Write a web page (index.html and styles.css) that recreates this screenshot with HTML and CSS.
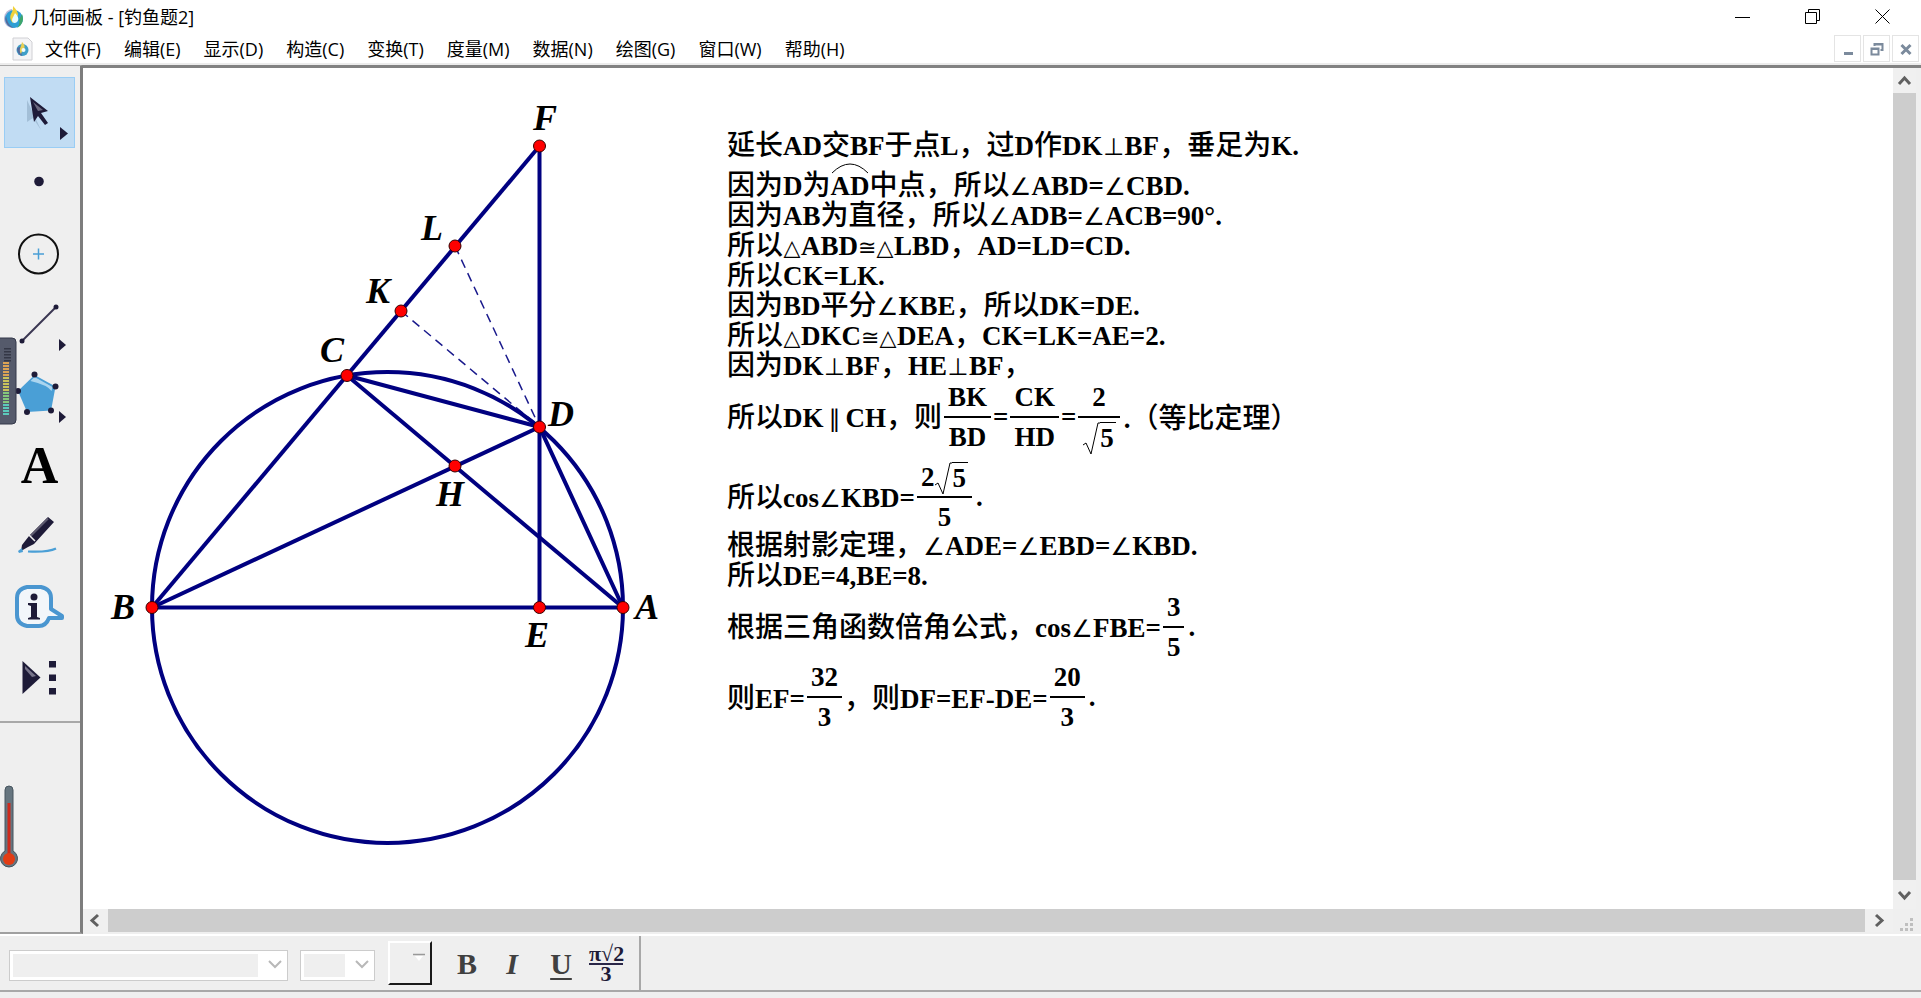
FILE: index.html
```html
<!DOCTYPE html>
<html lang="zh-CN">
<head>
    <meta charset="UTF-8">
    <meta name="viewport" content="width=device-width, initial-scale=1.0">
    <title>几何画板 - [钓鱼题2]</title>
    <link rel="stylesheet" href="styles.css">
</head>
<body>
    <header class="titlebar">
        <svg class="app-icon" width="22" height="24" viewBox="0 0 22 24">
            <path d="M9 4C3 5 1 10 1 14c0 5 4 9 9 9" fill="#b9b8d8"/>
            <circle cx="11" cy="14" r="9" fill="#2e9fd4"/>
            <path d="M11 23a9 9 0 0 1-8-12c1 5 3 10 8 12z" fill="#5b6798"/>
            <path d="M14 23c6-3 7-9 5-14l-3 6c1 3 0 6-2 8z" fill="#3fa66a"/>
            <path d="M10 1c3 3 5 6 5 9-1 3-5 4-5 8-4-4-3-8-1-11 1-2 1-4 1-6z" fill="#f1d23b"/>
            <path d="M12 8c4 4 4 7 2 9s-5 1-5-2c0-2 2-4 3-7z" fill="#e9fbff"/>
        </svg>
        <span class="title">几何画板 - [钓鱼题2]</span>
        <div class="win-buttons">
            <button type="button" aria-label="最小化"><svg width="16" height="16" viewBox="0 0 16 16"><path d="M0 8.5h15" class="thin"/></svg></button>
            <button type="button" aria-label="还原"><svg width="16" height="16" viewBox="0 0 16 16"><path d="M.5 3.500h11v11H.5zM3.500 3.500v-3h11v11h-3" class="thin"/></svg></button>
            <button type="button" aria-label="关闭"><svg width="16" height="16" viewBox="0 0 16 16"><path d="M.5.500l14 14M14.500.500l-14 14" class="thin"/></svg></button>
        </div>
    </header>

    <nav class="menubar">
        <svg class="doc-icon" width="22" height="24" viewBox="0 0 22 24">
            <path d="M1 1h15l4 4v18H1z" fill="#f4f4f6" stroke="#d0d0d4"/>
            <circle cx="10.500" cy="13" r="6" fill="#3f9fc8"/>
            <path d="M5 11c0 4 2 7 5 8-1-5-1-7 0-10z" fill="#4f6ba0"/>
            <path d="M10 5c3 3 3 5 2 7s-3 3-3 5c-2-3-1-6 0-8z" fill="#e6cf55"/>
            <circle cx="11.500" cy="13" r="2" fill="#effcff"/>
        </svg>
        <button type="button">文件(F)</button>
        <button type="button">编辑(E)</button>
        <button type="button">显示(D)</button>
        <button type="button">构造(C)</button>
        <button type="button">变换(T)</button>
        <button type="button">度量(M)</button>
        <button type="button">数据(N)</button>
        <button type="button">绘图(G)</button>
        <button type="button">窗口(W)</button>
        <button type="button">帮助(H)</button>
        <div class="doc-buttons">
            <button type="button" aria-label="最小化文档"><svg width="14" height="14" viewBox="0 0 14 14"><path d="M3 11.500h9" stroke="#7b8a9c" stroke-width="3"/></svg></button>
            <button type="button" aria-label="还原文档"><svg width="14" height="14" viewBox="0 0 14 14"><path d="M1.500 6.500h7v6h-7zM1 7h8M4.500 4V2h8v6h-2M4 2.500h9" fill="none" stroke="#7b8a9c" stroke-width="2"/></svg></button>
            <button type="button" aria-label="关闭文档"><svg width="14" height="14" viewBox="0 0 14 14"><path d="M2.500 3l9 9M11.500 3l-9 9" stroke="#7b8a9c" stroke-width="3"/></svg></button>
        </div>
    </nav>

    <main class="workspace">
        <aside class="toolbox">
            <div class="tools">
                <button type="button" class="tool active" aria-label="移动箭头工具">
                    <svg width="71" height="70" viewBox="4 76 71 70">
                        <path d="M27 99l0 22 6-4 8 12" fill="#8fabc4" opacity=".6"/>
                        <path d="M30 96l18 14-7 2 7 10-3 2-7-9-4 6z" fill="#1e1b38"/>
                        <path d="M33 101l10 8-5 1z" fill="#6d6a80"/>
                        <path d="M60 126l8 6.500-8 6.500z" fill="#1e1b38"/>
                    </svg>
                </button>
                <button type="button" class="tool" aria-label="点工具">
                    <svg width="71" height="70" viewBox="4 147 71 70"><circle cx="39" cy="180.500" r="4.800" fill="#1e1b38"/></svg>
                </button>
                <button type="button" class="tool" aria-label="圆工具">
                    <svg width="71" height="70" viewBox="4 217 71 70">
                        <circle cx="38.500" cy="252" r="19.500" fill="none" stroke="#111" stroke-width="2"/>
                        <path d="M33 252h11M38.500 246.500v11" stroke="#4a9fd6" stroke-width="1.500"/>
                    </svg>
                </button>
                <button type="button" class="tool" aria-label="线段工具">
                    <svg width="71" height="70" viewBox="4 288 71 70">
                        <path d="M22 340l34-34" stroke="#3a3752" stroke-width="2"/>
                        <circle cx="22" cy="340" r="2.500" fill="#1e1b38"/>
                        <circle cx="56" cy="306" r="2.500" fill="#1e1b38"/>
                        <path d="M59 338l7 6-7 6z" fill="#1e1b38"/>
                    </svg>
                </button>
                <button type="button" class="tool" aria-label="多边形工具">
                    <svg width="71" height="70" viewBox="4 358 71 70">
                        <path d="M34.500 373l21 11.500-4.500 24-24 1.500-9-21z" fill="#4a9fd6"/>
                        <path d="M34.500 375l18 10-1 4q-4-6-21-10z" fill="#c3e2f5" opacity=".8"/>
                        <g fill="#1e1b38">
                            <circle cx="34.500" cy="372.500" r="3"/>
                            <circle cx="55.500" cy="384.500" r="3"/>
                            <circle cx="51" cy="408.500" r="3"/>
                            <circle cx="27" cy="410" r="3"/>
                            <circle cx="18" cy="389" r="3"/>
                            <path d="M59 409l7 6-7 6z"/>
                        </g>
                    </svg>
                </button>
                <button type="button" class="tool text-tool" aria-label="文本工具">A</button>
                <button type="button" class="tool" aria-label="标记工具">
                    <svg width="71" height="70" viewBox="4 499 71 70">
                        <path d="M48 515l6 5-20 22-6 3-7 4 1-6 7-9z" fill="#1e1b38"/>
                        <path d="M48 516.500l-18 18" stroke="#5e5b70" stroke-width="2"/>
                        <path d="M29 533l6 6" stroke="#efefef" stroke-width="1.500"/>
                        <path d="M18 549l4-3 1 4-4 1z" fill="#4a9fd6"/>
                        <path d="M28 549.500q20 1 28-3" fill="none" stroke="#4a9fd6" stroke-width="2.200"/>
                    </svg>
                </button>
                <button type="button" class="tool" aria-label="信息工具">
                    <svg width="71" height="70" viewBox="4 570 71 70">
                        <path d="M27 585h14q10 2 10 11v11l11 7v2l-13 0q-3 8-10 8H27q-10-2-10-11V596q0-9 10-11z" fill="#f2f6fa" stroke="#4a96d0" stroke-width="4" stroke-linejoin="round"/>
                        <circle cx="34" cy="595" r="3.500" fill="#1e1b38"/>
                        <path d="M28 601h9v14l3 1v1.500H28V616l3-1v-11l-3-1z" fill="#1e1b38"/>
                    </svg>
                </button>
                <button type="button" class="tool" aria-label="自定义工具">
                    <svg width="71" height="70" viewBox="4 641 71 70">
                        <path d="M22.500 659l18 16.500-18 16.500z" fill="#1e1b38"/>
                        <path d="M25 664l11 10-4 1-7-8z" fill="#77748a"/>
                        <path d="M49 659h7v6.500h-7zM49 672.500h7v6.500h-7zM49 686h7v6.500h-7z" fill="#1e1b38"/>
                    </svg>
                </button>
            </div>

            <!-- level meter and thermometer docked on the window edge -->
            <svg class="meter" width="18" height="90" viewBox="0 0 18 90">
                <path d="M-2 1h14q4 0 4 4v78q0 4-4 4H-2z" fill="#555a6b" stroke="#34384a"/>
                <path d="M7.500 11v14" stroke="#343746" stroke-width="7" stroke-dasharray="1.500 1.500"/>
                <path d="M6 25v15" stroke="#dba254" stroke-width="6" stroke-dasharray="2 1"/>
                <path d="M6 40v15" stroke="#c9c35b" stroke-width="6" stroke-dasharray="2 1"/>
                <path d="M6 55v12" stroke="#84c77c" stroke-width="6" stroke-dasharray="2 1"/>
                <path d="M6 67v12" stroke="#5ccabb" stroke-width="6" stroke-dasharray="2 1"/>
            </svg>
            <svg class="thermo" width="20" height="86" viewBox="0 0 20 86">
                <path d="M5 67V6q0-4 4-4t4 4v61a8.500 8.500 0 1 1-8 0z" fill="#66757f" stroke="#46555f"/>
                <path d="M9 19v55" stroke="#cf2a1c" stroke-width="3"/>
                <circle cx="9" cy="75" r="6" fill="#e23c14"/>
            </svg>
        </aside>

        <section class="document">
            <div class="sketch">
                <svg class="figure" width="644" height="800" viewBox="83 67 644 800">
                    <g class="solid">
                        <circle cx="387.500" cy="606.500" r="235.500"/>
                        <path d="M152 606.500H623"/>
                        <path d="M539.500 145V606.500"/>
                        <path d="M152 606.500L539.500 145"/>
                        <path d="M152 606.500L539.500 426"/>
                        <path d="M347 374.500L623 606.500"/>
                        <path d="M347 374.500L539.500 426L623 606.500"/>
                    </g>
                    <g class="dashed">
                        <path d="M401 310L539.500 426"/>
                        <path d="M455 245L539.500 426"/>
                    </g>
                    <g class="points">
                        <circle cx="539.500" cy="145" r="6"/>
                        <circle cx="455" cy="245" r="6"/>
                        <circle cx="401" cy="310" r="6"/>
                        <circle cx="347" cy="374.500" r="6"/>
                        <circle cx="539.500" cy="426" r="6"/>
                        <circle cx="455" cy="465" r="6"/>
                        <circle cx="152" cy="606.500" r="6"/>
                        <circle cx="539.500" cy="606.500" r="6"/>
                        <circle cx="623" cy="606.500" r="6"/>
                    </g>
                    <g class="labels">
                        <text x="533" y="129">F</text>
                        <text x="421" y="239">L</text>
                        <text x="366" y="302">K</text>
                        <text x="320" y="361">C</text>
                        <text x="548" y="425">D</text>
                        <text x="436" y="505">H</text>
                        <text x="111" y="618">B</text>
                        <text x="525" y="646">E</text>
                        <text x="635" y="618">A</text>
                    </g>
                </svg>

                <div class="proof">
                    <p class="line spaced">延长<b>AD</b>交<b>BF</b>于点<b>L</b>，过<b>D</b>作<b>DK<i>⊥</i>BF</b>，垂足为<b>K.</b></p>
                    <p class="line">因为<b>D</b>为<b class="arc">AD<svg width="38" height="11" viewBox="0 0 38 11"><path d="M1 10Q19-8 37 10" fill="none" stroke="#000"/></svg></b>中点，所以<b><i>∠</i>ABD=<i>∠</i>CBD.</b></p>
                    <p class="line">因为<b>AB</b>为直径，所以<b><i>∠</i>ADB=<i>∠</i>ACB=90°.</b></p>
                    <p class="line">所以<b><i class="narrow">△</i>ABD<i class="narrow">≅</i><i class="narrow">△</i>LBD</b>，<b>AD=LD=CD.</b></p>
                    <p class="line">所以<b>CK=LK.</b></p>
                    <p class="line">因为<b>BD</b>平分<b><i>∠</i>KBE</b>，所以<b>DK=DE.</b></p>
                    <p class="line">所以<b><i class="narrow">△</i>DKC<i class="narrow">≅</i><i class="narrow">△</i>DEA</b>，<b>CK=LK=AE=2.</b></p>
                    <p class="line">因为<b>DK<i>⊥</i>BF</b>，<b>HE<i>⊥</i>BF</b>，</p>
                    <p class="line tall spaced">
                        <span>所以<b>DK<i>∥</i>CH</b>，则</span>
                        <b class="frac"><span>BK</span><span>BD</span></b>
                        <b>=</b>
                        <b class="frac"><span>CK</span><span>HD</span></b>
                        <b>=</b>
                        <b class="frac"><span>2</span><span class="root"><svg width="18" height="34" viewBox="0 0 18 34"><path d="M1 23l3-2 5 11L16 1h2" fill="none" stroke="#000"/></svg><span>5</span></span></b>
                        <span><b class="stop">.</b>（等比定理）</span>
                    </p>
                    <p class="line tall">
                        <span>所以<b>cos<i>∠</i>KBD=</b></span>
                        <b class="frac"><span class="root">2<svg width="18" height="34" viewBox="0 0 18 34"><path d="M1 23l3-2 5 11L16 1h2" fill="none" stroke="#000"/></svg><span>5</span></span><span>5</span></b>
                        <b class="stop">.</b>
                    </p>
                    <p class="line">根据射影定理，<b><i>∠</i>ADE=<i>∠</i>EBD=<i>∠</i>KBD.</b></p>
                    <p class="line">所以<b>DE=4,BE=8.</b></p>
                    <p class="line tall">
                        <span>根据三角函数倍角公式，<b>cos<i>∠</i>FBE=</b></span>
                        <b class="frac"><span>3</span><span>5</span></b>
                        <b class="stop">.</b>
                    </p>
                    <p class="line tall">
                        <span>则<b>EF=</b></span>
                        <b class="frac"><span>32</span><span>3</span></b>
                        <span>，则<b>DF=EF-DE=</b></span>
                        <b class="frac"><span>20</span><span>3</span></b>
                        <b class="stop">.</b>
                    </p>
                </div>
            </div>

            <div class="scroll vertical">
                <svg width="23" height="25" viewBox="0 0 23 25"><path d="M6 16l5.500-6 5.500 6" class="chevron"/></svg>
                <div class="thumb"></div>
                <svg width="23" height="29" viewBox="0 0 23 29"><path d="M6 12l5.500 6 5.500-6" class="chevron"/></svg>
            </div>
            <div class="scroll horizontal">
                <svg width="25" height="23" viewBox="0 0 25 23"><path d="M15 6l-6 5.500 6 5.500" class="chevron"/></svg>
                <div class="thumb"></div>
                <svg width="28" height="23" viewBox="0 0 28 23"><path d="M11 6l6 5.500-6 5.500" class="chevron"/></svg>
            </div>
            <svg class="grip" width="23" height="23" viewBox="0 0 23 23"><path d="M17 9h3v3h-3zM12 14h3v3h-3zM17 14h3v3h-3zM7 19h3v3H7zM12 19h3v3h-3zM17 19h3v3h-3z" fill="#bfbfbf"/></svg>
        </section>
    </main>

    <footer class="formatbar">
        <div class="controls">
            <div class="combo font-name">
                <select aria-label="字体" disabled><option></option></select>
                <svg width="14" height="9" viewBox="0 0 14 9"><path d="M1 1l6 6 6-6"/></svg>
            </div>
            <div class="combo font-size">
                <select aria-label="字号" disabled><option></option></select>
                <svg width="14" height="9" viewBox="0 0 14 9"><path d="M1 1l6 6 6-6"/></svg>
            </div>
            <button type="button" class="color" aria-label="颜色">
                <svg width="14" height="9" viewBox="0 0 14 9"><path d="M3 3h8l-4 5z" fill="#fff"/><path d="M1 1.500h12" stroke="#999" stroke-width="1.500"/></svg>
            </button>
            <button type="button" class="style bold">B</button>
            <button type="button" class="style italic">I</button>
            <button type="button" class="style underline">U</button>
            <button type="button" class="style symbols" aria-label="数学符号">
                <span>π√2</span><span>3</span>
            </button>
        </div>
    </footer>
    <div class="statusbar"></div>
</body>
</html>
```
FILE: styles.css
```css
* {
    box-sizing: border-box;
}

body {
    margin: 0;
    height: 100vh;
    display: flex;
    flex-direction: column;
    overflow: hidden;
    background: #efefef;
    color: #000;
    font-family: "Open Sans", "Noto Sans CJK SC", sans-serif;
    font-size: 18px;
    line-height: 30px;
}

button {
    padding: 0;
    border: none;
    background: none;
    color: inherit;
    font: inherit;
}

svg {
    display: block;
}

/* Title bar */
.titlebar {
    display: flex;
    align-items: center;
    height: 34px;
    padding: 0 3px;
    background: #fff;
}

.title {
    margin-left: 6px;
}

.win-buttons {
    display: flex;
    margin-left: auto;
}

.win-buttons button {
    width: 70px;
    height: 34px;
    display: flex;
    align-items: center;
    justify-content: center;
}

.thin {
    fill: none;
    stroke: #000;
}

/* Menu bar */
.menubar {
    display: flex;
    align-items: center;
    gap: 23px;
    height: 31px;
    padding: 0 2px 0 12px;
    background: #fff;
    border-bottom: 2px solid #ececec;
}

.doc-icon {
    margin-right: -12px;
}

.doc-buttons {
    display: flex;
    gap: 2px;
    margin-left: auto;
}

.doc-buttons button {
    width: 27px;
    height: 27px;
    display: flex;
    align-items: center;
    justify-content: center;
    border: 1px solid #e4e4e4;
}

/* Workspace */
.workspace {
    flex: 1;
    min-height: 0;
    display: flex;
}

.toolbox {
    position: relative;
    width: 83px;
    padding-top: 11px;
    background: #efefef;
    border-top: 1px solid #a8a8a8;
    border-right: 3px solid #7d7d7d;
    border-bottom: 2px solid #a0a0a0;
}

.tools {
    display: grid;
    grid-template-rows: repeat(9, 1fr);
    height: 646px;
    padding: 0 5px 8px 4px;
    border-bottom: 2px solid #a8a8a8;
}

.tool {
    display: flex;
    align-items: center;
    justify-content: center;
    overflow: hidden;
}

.tool.active {
    background: #c1dcf3;
    box-shadow: inset 0 0 0 1px #99cdf5;
}

.text-tool {
    font-family: "Liberation Serif", serif;
    font-size: 52px;
    font-weight: bold;
}

.meter {
    position: absolute;
    left: 0;
    top: 271px;
}

.thermo {
    position: absolute;
    left: 0;
    top: 718px;
}

.document {
    flex: 1;
    min-width: 0;
    display: grid;
    grid-template-columns: 1fr 23px;
    grid-template-rows: 1fr 23px;
    padding: 0 5px 2px 0;
    background: #efefef;
    border-top: 3px solid #828282;
}

.sketch {
    display: flex;
    align-items: flex-start;
    min-height: 0;
    overflow: hidden;
    background: #fff;
}

.figure {
    flex: none;
}

.solid {
    fill: none;
    stroke: #000080;
    stroke-width: 4;
}

.dashed {
    fill: none;
    stroke: #000080;
    stroke-opacity: .9;
    stroke-width: 1.5;
    stroke-dasharray: 9 6;
}

.points {
    fill: #f00;
    stroke: #300;
}

.labels {
    font-family: "Liberation Serif", serif;
    font-size: 36px;
    font-style: italic;
    font-weight: bold;
}

/* Proof text */
.proof {
    padding-top: 60px;
    font-family: "Noto Sans CJK SC", sans-serif;
    font-size: 28px;
    font-weight: 500;
    white-space: nowrap;
}

.line {
    height: 30px;
    margin: 0;
}

.line.spaced {
    margin-bottom: 10px;
}

.line b {
    font-family: "Liberation Serif", "DejaVu Serif", serif;
    font-size: 27px;
}

.line i {
    display: inline-block;
    width: 22px;
    text-align: center;
    font-family: "DejaVu Sans", sans-serif;
    font-size: 24px;
    font-style: normal;
    font-weight: normal;
}

.line .narrow {
    width: 18px;
    font-size: 22px;
}

/* rows with fractions */
.tall {
    display: flex;
    align-items: center;
    height: 70px;
    padding-top: 8px;
}

.frac {
    display: flex;
    flex-direction: column;
    margin: 0 2px;
    text-align: center;
}

.frac > span {
    height: 35px;
    padding: 0 4px 4px;
    border-bottom: 1px solid #000;
}

.frac > span:last-child {
    padding: 4px 4px 0;
    border-top: 1px solid #000;
    border-bottom: none;
}

.root {
    display: flex;
    justify-content: center;
}

.root span {
    height: 30px;
    padding-right: 2px;
    border-top: 1px solid #000;
}

.stop {
    margin-left: 2px;
}

.arc {
    position: relative;
}

.arc svg {
    position: absolute;
    left: 0;
    top: -8px;
}

/* Scroll bars */
.scroll {
    display: flex;
    background: #f0f0f0;
}

.vertical {
    flex-direction: column;
}

.horizontal {
    grid-row: 2;
}

.thumb {
    flex: 1;
    background: #cdcdcd;
}

.chevron {
    fill: none;
    stroke: #606060;
    stroke-width: 3;
}

/* Format bar */
.formatbar {
    height: 56px;
    border-top: 2px solid #fff;
}

.controls {
    display: flex;
    align-items: center;
    width: 641px;
    height: 54px;
    padding-left: 9px;
    border-right: 2px solid #a8a8a8;
}

.combo {
    position: relative;
    height: 31px;
    margin-right: 12px;
}

.combo select {
    appearance: none;
    width: 100%;
    height: 100%;
    border: 1px solid #ccc;
    border-radius: 0;
    background: #efefef;
    box-shadow: inset 0 0 0 3px #fff, inset -29px 0 #fff;
    opacity: 1;
}

.combo svg {
    position: absolute;
    right: 6px;
    top: 12px;
    fill: none;
    stroke: #b8b8b8;
    stroke-width: 2;
}

.font-name {
    width: 279px;
}

.font-size {
    width: 75px;
}

.color {
    display: flex;
    justify-content: flex-end;
    width: 44px;
    height: 44px;
    margin-left: 1px;
    padding: 10px 4px;
    border: 2px solid #fff;
    border-right: 2px solid #1a1a1a;
    border-bottom: 2px solid #1a1a1a;
}

.style {
    width: 48px;
    padding-top: 2px;
    color: #404040;
    font-family: "Liberation Serif", serif;
    font-size: 30px;
    font-weight: bold;
}

.bold {
    margin-left: 11px;
}

.italic {
    width: 42px;
    font-style: italic;
}

.underline {
    width: 56px;
    text-decoration: underline;
    text-decoration-thickness: 2px;
    text-underline-offset: 4px;
}

.symbols {
    width: 34px;
    color: #1e1b38;
    font-size: 22px;
    line-height: 18px;
}

.symbols span {
    display: block;
}

.symbols span:first-child {
    border-bottom: 2px solid #2a2748;
}

.statusbar {
    height: 8px;
    border-top: 2px solid #a8a8a8;
}
```
